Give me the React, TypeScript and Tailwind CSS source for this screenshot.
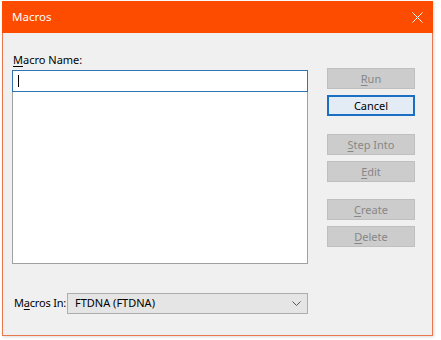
import React from "react";

const font = { fontFamily: '"Noto Sans", "Open Sans", sans-serif' };

function Btn(props: { u?: string; rest: string; focus?: boolean; className?: string }) {
  const { u = "", rest, focus, className = "" } = props;
  return (
    <div
      className={
        "flex h-[21px] w-[88px] items-center justify-center text-[11px] leading-none " +
        (focus
          ? "border-2 border-[#1a6fc4] bg-[#e3ecf4] text-black "
          : "border border-[#bfbfbf] bg-[#cccccc] text-[#878787] ") +
        className
      }
    >
      <span>
        {u && <span className="underline underline-offset-2">{u}</span>}
        {rest}
      </span>
    </div>
  );
}

export default function App() {
  return (
    <div className="h-[340px] w-[441px] bg-white pl-[2px] pt-px" style={font}>
      <div className="flex h-[335px] w-[431px] flex-col border-x border-b border-[#e8794f] bg-[#f0f0f0] shadow-[1px_1px_3px_rgba(0,0,0,0.15)]">
        <div className="-mx-px flex h-[32px] shrink-0 items-center justify-between bg-[#fd4c00] pl-[10px] pr-[10px] text-white">
          <span className="text-[11.5px]">Macros</span>
          <svg width="11" height="11" viewBox="0 0 11 11">
            <path d="M0.5 0.5 L10.5 10.5 M10.5 0.5 L0.5 10.5" stroke="white" strokeWidth="1" fill="none" />
          </svg>
        </div>

        <div className="flex flex-1 pl-[9px]">
          <div className="flex w-[296px] flex-col pt-[19px]">
            <div className="mb-[2px] h-[16px] pl-px text-[11px] leading-[16px] text-black">
              <span className="underline underline-offset-2">M</span>acro Name:
            </div>
            <div className="flex h-[22px] items-center border border-[#2e75b6] bg-white pl-[5px]">
              <div className="h-[12px] w-px bg-black" />
            </div>
            <div className="h-[172px] border-x border-b border-[#a0a0a0] bg-white" />
            <div className="mt-[29px] flex items-center pl-[2px]">
              <span className="flex-1 whitespace-nowrap text-[11px] tracking-[-0.2px] text-black">
                M<span className="underline underline-offset-2">a</span>cros In:
              </span>
              <div className="flex h-[21px] w-[241px] items-center justify-between border border-[#adadad] bg-[#e5e5e5] pl-[7px] pr-[6px]">
                <span className="text-[11px] text-black">FTDNA (FTDNA)</span>
                <svg width="9" height="5" viewBox="0 0 9 5">
                  <path d="M0.5 0.5 L4.5 4.5 L8.5 0.5" stroke="#555" strokeWidth="1" fill="none" />
                </svg>
              </div>
            </div>
          </div>

          <div className="ml-[19px] flex flex-col pt-[35px]">
            <Btn u="R" rest="un" />
            <Btn rest="Cancel" focus className="mt-[6px]" />
            <Btn u="S" rest="tep Into" className="mt-[18px]" />
            <Btn u="E" rest="dit" className="mt-[6px]" />
            <Btn u="C" rest="reate" className="mt-[17px]" />
            <Btn u="D" rest="elete" className="mt-[6px]" />
          </div>
        </div>
      </div>
    </div>
  );
}
